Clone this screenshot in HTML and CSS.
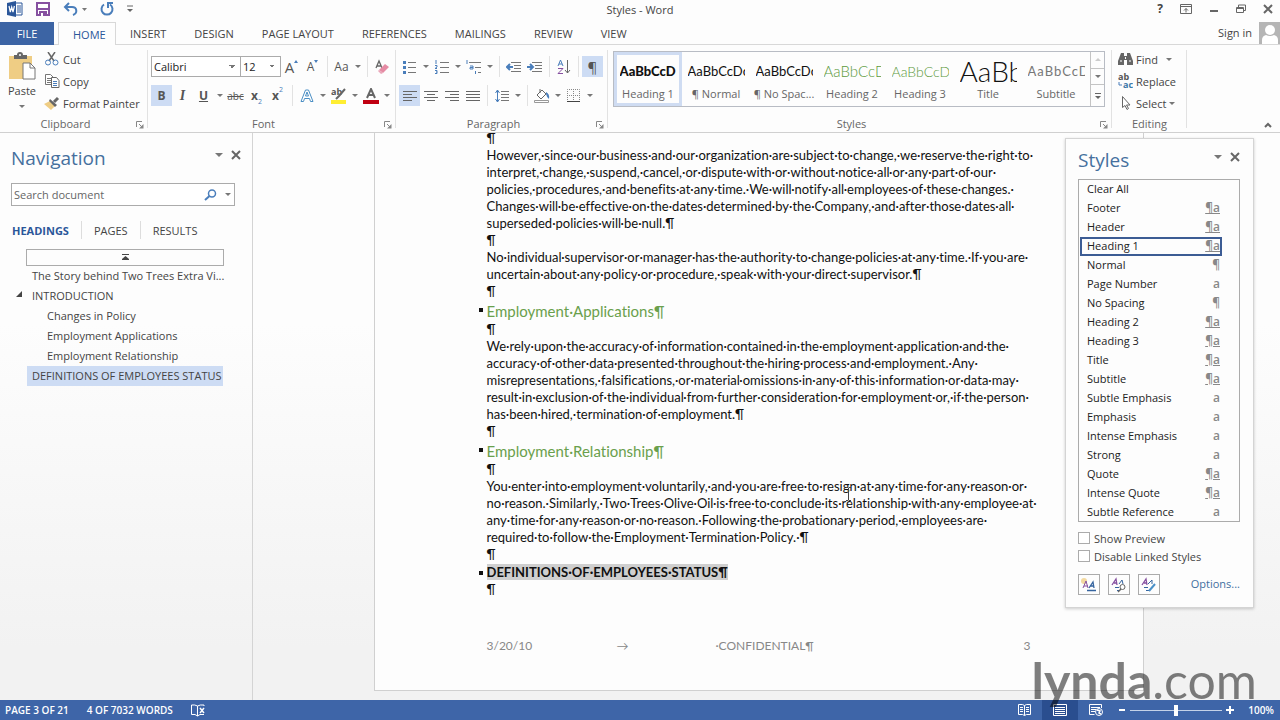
FILE: index.html
```html
<!DOCTYPE html>
<html lang="en">
<head>
  <meta charset="UTF-8" />
  <title>Styles - Word</title>
  <link rel="stylesheet" href="styles.css">
</head>
<body>
  <header class="titlebar">
    <div class="quick">
      <svg width="16" height="16" viewBox="0 0 16 16"><path d="M8 2h7v12H8z" fill="#fff" stroke="#2b579a"/><path d="M10 5h4M10 7h4M10 9h4M10 11h4" stroke="#2b579a"/><path d="M0 2l9-2v16l-9-2z" fill="#2b579a"/><path d="M2 5l1.300 6L4.700 6l1.300 5 1.400-6" fill="none" stroke="#fff" stroke-width="1.200"/></svg>
      <button aria-label="Save"><svg width="14" height="14" viewBox="0 0 14 14"><path d="M1 1h12v12H1z" fill="#fff" stroke="#8650a0" stroke-width="2"/><path d="M1 7h12" stroke="#8650a0" stroke-width="2"/><path d="M3 9h8v5H3z" fill="#8650a0"/><path d="M5 11h2v3H5z" fill="#fff"/></svg></button>
      <button aria-label="Undo"><svg width="24" height="14" viewBox="0 0 24 14"><path d="M6 1L2 5l4 4M2 5h7c5 0 6 6 1 8" fill="none" stroke="#4a7ebb" stroke-width="2"/><path d="M19 6h5l-2.500 3z" fill="#777"/></svg></button>
      <button aria-label="Redo"><svg width="14" height="14" viewBox="0 0 14 14"><path d="M4 2.500A5.500 5.500 0 1 0 10 2.500" fill="none" stroke="#4a7ebb" stroke-width="2"/><path d="M8 6V1h5" fill="none" stroke="#4a7ebb" stroke-width="2"/></svg></button>
      <button aria-label="Customize"><svg width="6" height="8" viewBox="0 0 6 8"><path d="M0 1h6" stroke="#666"/><path d="M0 4h6L3 7z" fill="#666"/></svg></button>
    </div>
    <div class="doc-title">Styles - Word</div>
    <div class="window-buttons">
      <button aria-label="Help"><b>?</b></button>
      <button aria-label="Ribbon display"><svg width="12" height="10" viewBox="0 0 12 10"><path d="M.5.5h11v9H.5zM.5 2.500h11M6 8.500V4.500M4 6.500l2-2 2 2" fill="none" stroke="#666"/></svg></button>
      <button aria-label="Minimize"><svg width="10" height="10" viewBox="0 0 10 10"><path d="M1 7h8" stroke="#666" stroke-width="2"/></svg></button>
      <button aria-label="Restore"><svg width="10" height="10" viewBox="0 0 10 10"><path d="M.5 3.500h7v5h-7zM.5 4.500h7M2.500 3V1h7v5.500H8" fill="none" stroke="#666"/></svg></button>
      <button aria-label="Close"><svg width="10" height="10" viewBox="0 0 10 10"><path d="M1 1l8 8M9 1L1 9" stroke="#666" stroke-width="2"/></svg></button>
    </div>
  </header>

  <nav class="tabs">
    <button class="tab file">FILE</button>
    <button class="tab active">HOME</button>
    <button class="tab">INSERT</button>
    <button class="tab">DESIGN</button>
    <button class="tab">PAGE LAYOUT</button>
    <button class="tab">REFERENCES</button>
    <button class="tab">MAILINGS</button>
    <button class="tab">REVIEW</button>
    <button class="tab">VIEW</button>
    <a class="signin" href="#">Sign in</a>
    <svg class="avatar" width="21" height="22" viewBox="0 0 21 22"><path d="M0 0h21v22H0z" fill="#b5b5b5"/><circle cx="11" cy="8" r="5" fill="#fff"/><path d="M3 22v-4q0-4 4-5 4 2 8 0 4 1 4 5v4z" fill="#fff"/></svg>
  </nav>

  <section class="ribbon">
    <div class="group clipboard">
      <div class="group-body">
        <button class="paste">
          <svg width="28" height="29" viewBox="0 0 28 29"><path d="M1 4h23v23H1z" fill="#efcd84"/><path d="M6 3h3q0-3 3-3t3 3h4v4H6z" fill="#666"/><circle cx="12" cy="3" r="1" fill="#fff"/><path d="M15 11h7l5 5v11H15z" fill="#fff" stroke="#777"/><path d="M22 11v5h5" fill="none" stroke="#777"/></svg>
          <span>Paste</span>
          <i class="arrow"></i>
        </button>
        <div class="stack">
          <button><svg width="16" height="14" viewBox="0 0 16 14"><path d="M4 0l6 9M11 0L5 9" stroke="#666" stroke-width="1.500"/><circle cx="4" cy="10.500" r="2.500" fill="none" stroke="#4a7ebb"/><circle cx="11.500" cy="10.500" r="2.500" fill="none" stroke="#4a7ebb"/></svg>Cut</button>
          <button><svg width="16" height="14" viewBox="0 0 16 14"><path d="M1.500.5h5l3 3v7h-8zM3 4.500h4M3 6.500h4M3 8.500h4" fill="#fff" stroke="#777"/><path d="M7.500 3.500h5l2.500 3v7H7.500z" fill="#fff" stroke="#666"/><path d="M9 7.500h4M9 9.500h4M9 11.500h4" stroke="#4a7ebb"/></svg>Copy</button>
          <button><svg width="16" height="14" viewBox="0 0 16 14"><path d="M0 8l6-3 5 5-4 4z" fill="#efcd84"/><path d="M6 3l7 6-2 2-6-6z" fill="#666"/><path d="M10 6l4-4" stroke="#666" stroke-width="3"/></svg>Format Painter</button>
        </div>
      </div>
      <div class="group-label">Clipboard</div>
      <svg class="launcher" width="8" height="8" viewBox="0 0 8 8"><path d="M.5 6V.5H6M3 3l3 3" fill="none" stroke="#888"/><path d="M7.500 3v4.500H3z" fill="#888"/></svg>
    </div>

    <div class="group font">
      <div class="group-rows">
        <div class="tools">
          <select class="font-name" aria-label="Font"><option>Calibri</option></select><select class="font-size" aria-label="Font size"><option>12</option></select>
          <button class="tool big" aria-label="Grow font">A<i class="up"></i></button>
          <button class="tool" aria-label="Shrink font">A<i class="down"></i></button>
          <i class="sep"></i>
          <button class="tool" aria-label="Change case">Aa</button><button class="drop" aria-label="More"><i class="arrow"></i></button>
          <i class="sep"></i>
          <button class="tool" aria-label="Clear formatting"><svg width="14" height="16" viewBox="0 0 14 16"><path d="M1 9L4 2l3 7M2 7h4" fill="none" stroke="#666" stroke-width="1.300"/><path d="M4 11l6-6 4 3-6 6z" fill="#e58ba4"/><path d="M3 12l3 3 2-1-4-3z" fill="#e9a5b8"/></svg></button>
        </div>
        <div class="tools">
          <button class="tool on"><b>B</b></button>
          <button class="tool italic">I</button>
          <button class="tool"><u><b>U</b></u></button><button class="drop" aria-label="More"><i class="arrow"></i></button>
          <button class="tool strike">abc</button>
          <button class="tool"><b>x</b><sub>2</sub></button>
          <button class="tool"><b>x</b><sup>2</sup></button>
          <i class="sep"></i>
          <button class="tool" aria-label="Text effects"><svg width="14" height="14" viewBox="0 0 14 14"><path d="M1 12.500L5.500 1h3L13 12.500h-2.500l-1-3h-5l-1 3zM5.500 7h3L7 3z" fill="#fff" stroke="#4a8ec4"/></svg></button><button class="drop" aria-label="More"><i class="arrow"></i></button>
          <button class="tool" aria-label="Highlight"><svg width="16" height="16" viewBox="0 0 16 16"><path d="M0 12h15v4H0z" fill="#ffee32"/><text x="0" y="7" class="tiny">ab</text><path d="M14 1L8 8l-3 3" stroke="#666" stroke-width="2" fill="none"/></svg></button><button class="drop" aria-label="More"><i class="arrow"></i></button>
          <button class="tool" aria-label="Font color"><svg width="16" height="16" viewBox="0 0 16 16"><path d="M0 12h16v4H0z" fill="#c00012"/><path d="M4 10L8 1l4 9M5.500 7h5" stroke="#666" stroke-width="2" fill="none"/></svg></button><button class="drop" aria-label="More"><i class="arrow"></i></button>
        </div>
      </div>
      <div class="group-label">Font</div>
      <svg class="launcher" width="8" height="8" viewBox="0 0 8 8"><path d="M.5 6V.5H6M3 3l3 3" fill="none" stroke="#888"/><path d="M7.500 3v4.500H3z" fill="#888"/></svg>
    </div>

    <div class="group paragraph">
      <div class="group-rows">
        <div class="tools">
          <button class="tool" aria-label="Bullets"><svg width="14" height="14" viewBox="0 0 14 14"><path d="M0 1h3v3H0zM0 6h3v3H0zM0 11h3v3H0z" fill="#4a7ebb"/><path d="M5 2.500h8M5 7.500h8M5 12.500h8" stroke="#777"/></svg></button><button class="drop" aria-label="More"><i class="arrow"></i></button>
          <button class="tool" aria-label="Numbering"><svg width="14" height="14" viewBox="0 0 14 14"><path d="M1 0v4M0 5.500h2v1.500l-2 1.500h2M0 10.500h2v3H0M1 12h1" fill="none" stroke="#4a7ebb"/><path d="M5 2.500h9M5 7.500h9M5 12.500h9" stroke="#777"/></svg></button><button class="drop" aria-label="More"><i class="arrow"></i></button>
          <button class="tool" aria-label="Multilevel list"><svg width="16" height="14" viewBox="0 0 16 14"><path d="M1 0v4M4 6h3v3H4V7.500h3M9.500 11v3" fill="none" stroke="#4a7ebb"/><path d="M3 2.500h12M9 7.500h6M12 12.500h3" stroke="#777"/></svg></button><button class="drop" aria-label="More"><i class="arrow"></i></button>
          <i class="sep"></i>
          <button class="tool" aria-label="Decrease indent"><svg width="15" height="12" viewBox="0 0 15 12"><path d="M5 1.500h10M8 4.500h7M8 7.500h7M5 10.500h10" stroke="#777"/><path d="M7 6H2M4 3L1 6l3 3" fill="none" stroke="#4a7ebb" stroke-width="2"/></svg></button>
          <button class="tool" aria-label="Increase indent"><svg width="15" height="12" viewBox="0 0 15 12"><path d="M5 1.500h10M8 4.500h7M8 7.500h7M5 10.500h10" stroke="#777"/><path d="M0 6h5M3 3l3 3-3 3" fill="none" stroke="#4a7ebb" stroke-width="2"/></svg></button>
          <i class="sep"></i>
          <button class="tool" aria-label="Sort"><svg width="14" height="16" viewBox="0 0 14 16"><path d="M1 7l2.500-6L6 7M2 5h3" fill="none" stroke="#4a7ebb"/><path d="M1 9.500h5l-5 5h5" fill="none" stroke="#8650a0"/><path d="M10.500 1v13M8 11l2.500 3 2.500-3" fill="none" stroke="#666"/></svg></button>
          <i class="sep"></i>
          <button class="tool on pilcrow">¶</button>
        </div>
        <div class="tools">
          <button class="tool on" aria-label="Align left"><svg width="14" height="12" viewBox="0 0 14 12"><path d="M0 1.500h14M0 4.500h9M0 7.500h14M0 10.500h9" stroke="#666"/></svg></button>
          <button class="tool" aria-label="Center"><svg width="14" height="12" viewBox="0 0 14 12"><path d="M0 1.500h14M3 4.500h8M0 7.500h14M3 10.500h8" stroke="#666"/></svg></button>
          <button class="tool" aria-label="Align right"><svg width="14" height="12" viewBox="0 0 14 12"><path d="M0 1.500h14M5 4.500h9M0 7.500h14M5 10.500h9" stroke="#666"/></svg></button>
          <button class="tool" aria-label="Justify"><svg width="14" height="12" viewBox="0 0 14 12"><path d="M0 1.500h14M0 4.500h14M0 7.500h14M0 10.500h14" stroke="#666"/></svg></button>
          <i class="sep"></i>
          <button class="tool" aria-label="Line spacing"><svg width="14" height="14" viewBox="0 0 14 14"><path d="M2.500 1v12M.5 4l2-3 2 3M.5 10l2 3 2-3" fill="none" stroke="#4a7ebb"/><path d="M6 2.500h8M6 5.500h8M6 8.500h8M6 11.500h8" stroke="#777"/></svg></button><button class="drop" aria-label="More"><i class="arrow"></i></button>
          <i class="sep"></i>
          <button class="tool" aria-label="Shading"><svg width="16" height="16" viewBox="0 0 16 16"><path d="M8 2L3 7l4 4 5-5zM6 5V1" fill="#fff" stroke="#666"/><path d="M12 4q4 2 3 7-2-1-3-5z" fill="#4a7ebb"/><path d="M.5 12.500h14v2H.5z" fill="#fff" stroke="#999"/></svg></button><button class="drop" aria-label="More"><i class="arrow"></i></button>
          <button class="tool" aria-label="Borders"><svg width="14" height="14" viewBox="0 0 14 14"><path d="M.5 13V.5h12V13M6.500 0v13M0 6.500h13" fill="none" stroke="#888" stroke-dasharray="1 1"/><path d="M0 12.500h13" stroke="#444"/></svg></button><button class="drop" aria-label="More"><i class="arrow"></i></button>
        </div>
      </div>
      <div class="group-label">Paragraph</div>
      <svg class="launcher" width="8" height="8" viewBox="0 0 8 8"><path d="M.5 6V.5H6M3 3l3 3" fill="none" stroke="#888"/><path d="M7.500 3v4.500H3z" fill="#888"/></svg>
    </div>

    <div class="group styles">
      <div class="gallery">
        <button class="style selected"><span class="sample h1s">AaBbCcD</span><span>Heading 1</span></button>
        <button class="style"><span class="sample">AaBbCcDc</span><span>¶ Normal</span></button>
        <button class="style"><span class="sample">AaBbCcDc</span><span>¶ No Spac...</span></button>
        <button class="style"><span class="sample green">AaBbCcD</span><span>Heading 2</span></button>
        <button class="style"><span class="sample green h3s">AaBbCcD</span><span>Heading 3</span></button>
        <button class="style"><span class="sample title">AaBb</span><span>Title</span></button>
        <button class="style"><span class="sample subtitle">AaBbCcD</span><span>Subtitle</span></button>
        <div class="gallery-scroll">
          <button aria-label="Up"><i class="arrow flip"></i></button>
          <button aria-label="Down"><i class="arrow"></i></button>
          <button aria-label="More styles"><svg width="6" height="8" viewBox="0 0 6 8"><path d="M0 1.500h6" stroke="#666"/><path d="M0 4h6L3 7z" fill="#666"/></svg></button>
        </div>
      </div>
      <div class="group-label">Styles</div>
      <svg class="launcher" width="8" height="8" viewBox="0 0 8 8"><path d="M.5 6V.5H6M3 3l3 3" fill="none" stroke="#888"/><path d="M7.500 3v4.500H3z" fill="#888"/></svg>
    </div>

    <div class="group editing">
      <div class="group-body">
        <div class="stack">
          <button><svg width="15" height="14" viewBox="0 0 15 14"><path d="M3 1h3v3h3V1h3l3 8v4H9V8H6v5H0V9z" fill="#666"/><path d="M2 9h2M11 9h2M7.500 5v2" stroke="#fff"/></svg>Find<i class="arrow far"></i></button>
          <button><svg width="15" height="16" viewBox="0 0 15 16"><text x="0" y="7" class="tiny">ab</text><text x="5" y="15" class="tiny blue">ac</text><path d="M1 9v3h3" fill="none" stroke="#4a7ebb"/></svg>Replace</button>
          <button><svg width="15" height="14" viewBox="0 0 15 14"><path d="M4.500.5v11l2.500-2 2 4 1.500-1-2-3.500h3.500z" fill="#fff" stroke="#666"/></svg>Select<i class="arrow"></i></button>
        </div>
      </div>
      <div class="group-label">Editing</div>
    </div>
    <button class="collapse" aria-label="Collapse ribbon"><svg width="8" height="6" viewBox="0 0 8 6"><path d="M1 5l3-3 3 3" fill="none" stroke="#666" stroke-width="2"/></svg></button>
  </section>

  <main class="workspace">
    <aside class="navigation">
      <div class="pane-head">
        <h2>Navigation</h2>
        <button aria-label="Pane options"><i class="arrow wide"></i></button>
        <button aria-label="Close pane"><svg width="10" height="10" viewBox="0 0 10 10"><path d="M1 1l8 8M9 1L1 9" stroke="#666" stroke-width="2"/></svg></button>
      </div>
      <div class="search">
        <input type="text" placeholder="Search document" aria-label="Search document">
        <svg width="13" height="12" viewBox="0 0 13 12"><circle cx="8" cy="4.500" r="3.500" fill="none" stroke="#4a7ebb" stroke-width="1.500"/><path d="M5.500 7L1 11" stroke="#4a7ebb" stroke-width="2"/></svg>
        <i class="arrow"></i>
      </div>
      <div class="nav-tabs">
        <button class="current">HEADINGS</button>
        <button>PAGES</button>
        <button>RESULTS</button>
      </div>
      <button class="to-top" aria-label="Jump to the beginning"><svg width="7" height="7" viewBox="0 0 7 7"><path d="M0 .5h7" stroke="#444"/><path d="M3.500 2L7 5v1H0V5z" fill="#444"/></svg></button>
      <ul class="tree">
        <li>The Story behind Two Trees Extra Vi...</li>
        <li class="open">INTRODUCTION</li>
        <li class="child">Changes in Policy</li>
        <li class="child">Employment Applications</li>
        <li class="child">Employment Relationship</li>
        <li class="picked">DEFINITIONS OF EMPLOYEES STATUS</li>
      </ul>
    </aside>

    <section class="canvas">
      <article class="page">
        <p>¶</p>
        <p>However,·since·our·business·and·our·organization·are·subject·to·change,·we·reserve·the·right·to·<br>interpret,·change,·suspend,·cancel,·or·dispute·with·or·without·notice·all·or·any·part·of·our·<br>policies,·procedures,·and·benefits·at·any·time.·We·will·notify·all·employees·of·these·changes.·<br>Changes·will·be·effective·on·the·dates·determined·by·the·Company,·and·after·those·dates·all·<br>superseded·policies·will·be·null.¶</p>
        <p>¶</p>
        <p>No·individual·supervisor·or·manager·has·the·authority·to·change·policies·at·any·time.·If·you·are·<br>uncertain·about·any·policy·or·procedure,·speak·with·your·direct·supervisor.¶</p>
        <p>¶</p>
        <h3>Employment·Applications¶</h3>
        <p>¶</p>
        <p>We·rely·upon·the·accuracy·of·information·contained·in·the·employment·application·and·the·<br>accuracy·of·other·data·presented·throughout·the·hiring·process·and·employment.·Any·<br>misrepresentations,·falsifications,·or·material·omissions·in·any·of·this·information·or·data·may·<br>result·in·exclusion·of·the·individual·from·further·consideration·for·employment·or,·if·the·person·<br>has·been·hired,·termination·of·employment.¶</p>
        <p>¶</p>
        <h3>Employment·Relationship¶</h3>
        <p>¶</p>
        <p>You·enter·into·employment·voluntarily,·and·you·are·free·to·resign·at·any·time·for·any·reason·or·<br>no·reason.·Similarly,·Two·Trees·Olive·Oil·is·free·to·conclude·its·relationship·with·any·employee·at·<br>any·time·for·any·reason·or·no·reason.·Following·the·probationary·period,·employees·are·<br>required·to·follow·the·Employment·Termination·Policy.·¶</p>
        <p>¶</p>
        <h1><span>DEFINITIONS·OF·EMPLOYEES·STATUS¶</span></h1>
        <p>¶</p>
        <footer class="page-foot"><span>3/20/10</span><span>→</span><span>·CONFIDENTIAL¶</span><span>3</span></footer>
      </article>
    </section>

    <aside class="styles-pane">
      <div class="pane-head">
        <h2>Styles</h2>
        <button aria-label="Pane options"><i class="arrow wide"></i></button>
        <button aria-label="Close pane"><svg width="10" height="10" viewBox="0 0 10 10"><path d="M1 1l8 8M9 1L1 9" stroke="#666" stroke-width="2"/></svg></button>
      </div>
      <ul class="style-list">
        <li>Clear All</li>
        <li>Footer<u>¶a</u></li>
        <li>Header<u>¶a</u></li>
        <li class="chosen">Heading 1<u>¶a</u></li>
        <li>Normal<b>¶</b></li>
        <li>Page Number<b>a</b></li>
        <li>No Spacing<b>¶</b></li>
        <li>Heading 2<u>¶a</u></li>
        <li>Heading 3<u>¶a</u></li>
        <li>Title<u>¶a</u></li>
        <li>Subtitle<u>¶a</u></li>
        <li>Subtle Emphasis<b>a</b></li>
        <li>Emphasis<b>a</b></li>
        <li>Intense Emphasis<b>a</b></li>
        <li>Strong<b>a</b></li>
        <li>Quote<u>¶a</u></li>
        <li>Intense Quote<u>¶a</u></li>
        <li>Subtle Reference<b>a</b></li>
      </ul>
      <label><input type="checkbox">Show Preview</label>
      <label><input type="checkbox">Disable Linked Styles</label>
      <div class="pane-actions">
        <button aria-label="New style"><svg width="16" height="16" viewBox="0 0 16 16"><circle cx="3" cy="4" r="3" fill="#f3d9a0"/><path d="M2 11l3-7 2 7M3 9h4" fill="none" stroke="#8650a0"/><path d="M8 11l4-6 1 6M9 9h4M6 13.500h9" fill="none" stroke="#35649f" stroke-width="1.300"/></svg></button>
        <button aria-label="Style inspector"><svg width="16" height="16" viewBox="0 0 16 16"><path d="M1 8l4-6 1 6M3 6h3" fill="none" stroke="#8650a0" stroke-width="1.300"/><path d="M8 7l3-4 1 4M4 10.500h4M6 13.500h3" fill="none" stroke="#35649f"/><circle cx="11.500" cy="10" r="2.500" fill="#fff" stroke="#666"/><path d="M10 12l-3 3" stroke="#666" stroke-width="1.500"/></svg></button>
        <button aria-label="Manage styles"><svg width="16" height="16" viewBox="0 0 16 16"><path d="M1 8l4-6 1 6M3 6h3" fill="none" stroke="#8650a0" stroke-width="1.300"/><path d="M7 7l4-4v4M3 10.500h4M5 13.500h3" fill="none" stroke="#35649f"/><path d="M14 7l-6 7" stroke="#4a90c8" stroke-width="2"/></svg></button>
        <a href="#">Options...</a>
      </div>
    </aside>

    <svg class="ibeam" width="7" height="14" viewBox="0 0 7 14"><path d="M1 .5h2l.5 1 .5-1h2M3.500 1v12M1 13.500h2l.5-1 .5 1h2" fill="none" stroke="#444"/></svg>
    <div class="watermark"><b>lynda</b>.com</div>
  </main>

  <footer class="statusbar">
    <span>PAGE 3 OF 21</span>
    <span>4 OF 7032 WORDS</span>
    <svg width="15" height="13" viewBox="0 0 15 13"><path d="M6.500 12V2Q4 .5.500 1v9.500H4l2.500 1.500L9 10.500h4M6.500 2Q9 .5 13 1v1" fill="none" stroke="#fff"/><path d="M9 4l4 5M13 4L9 9" stroke="#fff" stroke-width="1.500"/></svg>
    <div class="status-right">
      <div class="views">
        <button aria-label="Read mode"><svg width="13" height="12" viewBox="0 0 13 12"><path d="M6.500 11.500V1.500l-2-1h-4v10h4l2 1 2-1h4V.5h-4l-2 1M2 3.500h3M2 5.500h3M2 7.500h3M8 3.500h3M8 5.500h3M8 7.500h3" fill="none" stroke="#fff"/></svg></button>
        <button class="current" aria-label="Print layout"><svg width="14" height="12" viewBox="0 0 14 12"><path d="M.5.5h13v11H.5zM2 3.500h10M2 5.500h10M2 7.500h10M2 9.500h10" fill="none" stroke="#fff"/></svg></button>
        <button aria-label="Web layout"><svg width="14" height="12" viewBox="0 0 14 12"><path d="M12.500 4V.5H.5v10h5M2 3.500h9M2 5.500h5M2 7.500h4" fill="none" stroke="#fff"/><circle cx="10" cy="8" r="3.500" fill="#3e65a8" stroke="#fff"/><path d="M8 6l3 1-1 2 2 1" fill="none" stroke="#fff" stroke-width="1.500"/></svg></button>
      </div>
      <button class="zoom-step" aria-label="Zoom out"><svg width="8" height="8" viewBox="0 0 8 8"><path d="M1 4h6" stroke="#fff" stroke-width="2"/></svg></button>
      <input class="zoom" type="range" min="0" max="100" value="50" aria-label="Zoom">
      <button class="zoom-step" aria-label="Zoom in"><svg width="8" height="8" viewBox="0 0 8 8"><path d="M0 4h8M4 0v8" stroke="#fff" stroke-width="2"/></svg></button>
      <span class="percent">100%</span>
    </div>
  </footer>
</body>
</html>
```
FILE: styles.css
```css
* {
  box-sizing: border-box;
}
body {
  margin: 0;
  height: 100vh;
  display: flex;
  flex-direction: column;
  overflow: hidden;
  font-family: "Open Sans", "Noto Sans", sans-serif;
  font-size: 11px;
  color: #444;
  background: linear-gradient(#fdfdfd 0, #fdfdfd 45%, #f2f2f2 90%);
}
button {
  padding: 0;
  border: 0;
  background: none;
  font: inherit;
  color: inherit;
  white-space: nowrap;
}
svg {
  display: block;
  flex: none;
}
h1, h2, h3, p, ul {
  margin: 0;
  padding: 0;
  font-weight: normal;
}
ul {
  list-style: none;
}
a {
  text-decoration: none;
  color: inherit;
}
.arrow {
  display: inline-block;
  border: 3px solid transparent;
  border-top-color: #777;
  border-bottom: 0;
}
.arrow.wide {
  border-width: 4px 4px 0;
}
.arrow.flip {
  border: 3px solid transparent;
  border-bottom-color: #ccc;
  border-top: 0;
}
.tiny {
  font-size: 9px;
  font-weight: bold;
  fill: #555;
}
.tiny.blue {
  fill: #3c78a8;
}

/* title bar */
.titlebar {
  display: grid;
  grid-template-columns: 1fr auto 1fr;
  align-items: center;
  height: 22px;
}
.quick {
  display: flex;
  align-items: center;
  gap: 13px;
  padding: 0 0 5px 7px;
}
.doc-title {
  padding-bottom: 3px;
}
.window-buttons {
  display: flex;
  justify-content: flex-end;
  align-items: center;
  gap: 17px;
  padding: 0 7px 5px 0;
}
.window-buttons b {
  font-size: 12px;
}

/* tabs */
.tabs {
  display: flex;
  height: 23px;
  border-bottom: 1px solid #d8d8d8;
}
.tab {
  padding: 0 14px;
  height: 23px;
}
.tab.file {
  width: 54px;
  margin-right: 4px;
  background: #3c64a4;
  color: #fff;
}
.tab.active {
  width: 58px;
  background: #fdfdfd;
  border: 1px solid #d8d8d8;
  border-bottom: 0;
  color: #2b579a;
}
.signin {
  margin-left: auto;
  margin-right: 7px;
  line-height: 22px;
}

/* ribbon */
.ribbon {
  position: relative;
  display: flex;
  height: 88px;
  flex: none;
  border-bottom: 1px solid #d0d0d0;
}
.group {
  position: relative;
  display: flex;
  flex: none;
  flex-direction: column;
  margin-top: 3px;
  background: linear-gradient(#e2e2e2, #e2e2e2) right 2px / 1px 78px no-repeat;
}
.clipboard { width: 148px; }
.font { width: 248px; }
.paragraph { width: 212px; }
.styles { width: 504px; }
.editing { width: 75px; }
.group-body {
  display: flex;
}
.group-label {
  margin-top: auto;
  line-height: 17px;
  text-align: center;
  color: #666;
}
.clipboard .group-label,
.font .group-label,
.paragraph .group-label,
.styles .group-label {
  padding-right: 17px;
}
.launcher {
  position: absolute;
  right: 4px;
  bottom: 3px;
}
.paste {
  display: flex;
  flex-direction: column;
  align-items: center;
  width: 44px;
  padding-top: 4px;
}
.paste span {
  line-height: 20px;
}
.paste .arrow {
  margin-top: 4px;
}
.stack {
  display: flex;
  flex-direction: column;
}
.stack button {
  display: flex;
  align-items: center;
  gap: 3px;
  height: 22px;
}
.arrow.far {
  margin-left: 5px;
}
.editing .stack {
  padding-left: 6px;
}
.group-rows {
  display: flex;
  flex-direction: column;
  gap: 8px;
  padding: 8px 0 0 3px;
}
.tools {
  display: flex;
  height: 21px;
}
.tool {
  display: flex;
  flex: none;
  align-items: center;
  justify-content: center;
  width: 21px;
  height: 21px;
  font-size: 12px;
  color: #555;
}
.on {
  background: #cddcf4;
}
.drop {
  display: flex;
  align-items: center;
  justify-content: center;
  width: 11px;
}
.sep {
  width: 8px;
  background: linear-gradient(#e2e2e2, #e2e2e2) 4px 0 / 1px 21px no-repeat;
}
.tool.big {
  font-size: 15px;
}
.up, .down {
  margin-bottom: 10px;
  border: 2px solid transparent;
  border-bottom: 3px solid #4a7ebb;
  border-top: 0;
}
.down {
  border-top: 3px solid #4a7ebb;
  border-bottom: 0;
}
.italic {
  font: italic bold 14px "Liberation Serif", serif;
}
.strike {
  text-decoration: line-through;
  font-size: 10px;
}
.tool sub, .tool sup {
  align-self: flex-end;
  font-size: 7px;
  color: #4a7ebb;
}
.tool sup {
  align-self: flex-start;
}
.pilcrow {
  font-size: 15px;
}
.font-name, .font-size {
  width: 90px;
  height: 21px;
  padding: 0 2px;
  border: 1px solid #ababab;
  border-radius: 0;
  appearance: none;
  font: inherit;
  color: #222;
  background: linear-gradient(45deg, transparent 50%, #777 50%) right 8px center / 3px 3px no-repeat,
    linear-gradient(-45deg, transparent 50%, #777 50%) right 5px center / 3px 3px no-repeat, #fff;
}
.font-size {
  width: 40px;
  border-left: 0;
}

/* style gallery */
.gallery {
  display: flex;
  height: 56px;
  margin: 3px 7px 0 5px;
  border: 1px solid #b8bcc4;
}
.style {
  display: flex;
  flex-direction: column;
  align-items: center;
  width: 68px;
  height: 54px;
  padding-top: 6px;
  line-height: 18px;
  color: #666;
}
.style.selected {
  padding-top: 3px;
  border: 3px solid #cfdcf2;
}
.sample {
  width: 57px;
  height: 27px;
  overflow: hidden;
  text-align: left;
  font: 13px/27px Lato, sans-serif;
  color: #111;
}
.sample.h1s {
  font-weight: 900;
}
.sample.green {
  font-size: 15px;
  font-weight: 300;
  color: #5c9a3c;
}
.sample.h3s {
  font-size: 14px;
}
.sample.title {
  font-size: 28px;
  font-weight: 300;
}
.sample.subtitle {
  color: #777;
  letter-spacing: 1px;
}
.gallery-scroll {
  display: grid;
  flex: 1;
  border-left: 1px solid #c4c4c4;
}
.gallery-scroll button {
  display: flex;
  align-items: center;
  justify-content: center;
}
.gallery-scroll button + button {
  border-top: 1px solid #c4c4c4;
}
.collapse {
  position: absolute;
  right: 8px;
  bottom: 4px;
}

/* panes */
.workspace {
  position: relative;
  display: flex;
  flex: 1;
  min-height: 0;
}
.pane-head {
  display: flex;
  align-items: center;
  gap: 8px;
}
.pane-head h2 {
  margin-right: auto;
  font-size: 19px;
  line-height: 28px;
  color: #46709e;
}
.pane-head button {
  display: flex;
  margin-bottom: 7px;
}
.navigation {
  width: 253px;
  flex: none;
  padding: 11px 11px 0;
  border-right: 1px solid #d4d4d4;
}
.search {
  display: flex;
  align-items: center;
  gap: 8px;
  height: 23px;
  margin: 11px 6px 0 0;
  padding: 0 3px 0 2px;
  border: 1px solid #ababab;
  background: #fff;
}
.search input {
  flex: 1;
  min-width: 0;
  padding: 0;
  border: 0;
  background: none;
  font: inherit;
}
.search input::placeholder {
  color: #666;
}
.nav-tabs {
  display: flex;
  margin: 15px 0 10px;
}
.nav-tabs button {
  padding: 0 12px;
  height: 18px;
}
.nav-tabs button + button {
  border-left: 1px solid #ddd;
}
.nav-tabs .current {
  padding-left: 1px;
  font-weight: bold;
  color: #2b579a;
}
.to-top {
  display: flex;
  align-items: center;
  justify-content: center;
  width: 198px;
  height: 17px;
  margin-left: 15px;
  border: 1px solid #ababab;
}
.tree li {
  position: relative;
  width: 196px;
  margin-left: 16px;
  padding-left: 5px;
  line-height: 20px;
  white-space: nowrap;
}
.tree .child {
  padding-left: 20px;
}
.tree .picked {
  background: #cddcf4;
}
.tree .open::before {
  content: "";
  position: absolute;
  left: -11px;
  top: 5px;
  border: 3px solid #444;
  border-top-color: transparent;
  border-left-color: transparent;
}

/* document */
.canvas {
  display: flex;
  flex: 1;
  justify-content: center;
  align-items: flex-start;
  padding-right: 16px;
  overflow: hidden;
}
.page {
  width: 770px;
  margin-top: -4px;
  padding: 0 112px 36px;
  background: #fdfdfd;
  border: 1px solid #d0d0d0;
  font: 13px/17px Lato, sans-serif;
  font-variant-ligatures: none;
  color: #111;
  white-space: nowrap;
}
.page h3 {
  position: relative;
  padding-top: 2px;
  font-size: 15px;
  line-height: 19px;
  color: #6aa04c;
}
.page h1 {
  position: relative;
  font-size: 13px;
  line-height: 18px;
  font-weight: bold;
}
.page h1 span {
  background: #cfcfcf;
}
.page h1::before, .page h3::before {
  content: "";
  position: absolute;
  left: -8px;
  top: 8px;
  width: 4px;
  height: 4px;
  background: #111;
}
.page-foot {
  display: grid;
  grid-template-columns: 130px 99px 1fr auto;
  margin-top: 39px;
  font-size: 12px;
  color: #888;
}
.styles-pane {
  position: absolute;
  top: 5px;
  right: 26px;
  width: 189px;
  padding: 7px 13px 12px 12px;
  background: #fdfdfd;
  border: 1px solid #d4d4d4;
  box-shadow: 0 1px 3px rgba(0, 0, 0, 0.2);
}
.style-list {
  display: grid;
  grid-auto-rows: 1fr;
  height: 343px;
  margin: 5px 0 7px;
  border: 1px solid #ababab;
  color: #222;
}
.style-list li {
  display: flex;
  justify-content: space-between;
  align-items: center;
  min-height: 0;
  margin: 0 17px 0 1px;
  padding: 0 2px 0 7px;
  line-height: 14px;
}
.style-list .chosen {
  border: 2px solid #3c5c94;
  padding: 0 0 0 5px;
}
.style-list u, .style-list b {
  font-size: 12px;
  font-weight: 600;
  color: #888;
}
.styles-pane label {
  display: flex;
  align-items: center;
  gap: 4px;
  height: 18px;
}
.styles-pane input {
  appearance: none;
  width: 12px;
  height: 12px;
  margin: 0;
  border: 1px solid #ababab;
  background: #fff;
}
.pane-actions {
  display: flex;
  gap: 8px;
  margin-top: 9px;
}
.pane-actions button {
  display: flex;
  align-items: center;
  justify-content: center;
  width: 22px;
  height: 21px;
  border: 1px solid #ababab;
}
.pane-actions a {
  margin-left: auto;
  line-height: 20px;
  color: #3f6f9f;
}
.ibeam {
  position: absolute;
  left: 845px;
  top: 354px;
}
.watermark {
  position: absolute;
  right: 23px;
  bottom: -10px;
  z-index: 2;
  font: 50px/60px Lato, sans-serif;
  color: rgba(0, 0, 0, 0.5);
}

/* status bar */
.statusbar {
  display: flex;
  align-items: center;
  height: 20px;
  flex: none;
  padding: 0 6px 0 5px;
  gap: 18px;
  background: #3e65a8;
  color: #fff;
}
.statusbar span {
  font-size: 10px;
  font-weight: 600;
}
.status-right {
  display: flex;
  align-items: center;
  gap: 4px;
  margin-left: auto;
}
.views {
  display: flex;
}
.views button {
  display: flex;
  align-items: center;
  justify-content: center;
  width: 36px;
  height: 20px;
}
.views .current {
  background: #2a4e8f;
}
.zoom {
  width: 92px;
  height: 12px;
  margin: 0;
  appearance: none;
  background: linear-gradient(#c4d2e8, #c4d2e8) center / 100% 1px no-repeat;
}
.zoom::-webkit-slider-thumb {
  appearance: none;
  width: 4px;
  height: 11px;
  background: #fff;
}
.percent {
  margin-left: 10px;
}
```
